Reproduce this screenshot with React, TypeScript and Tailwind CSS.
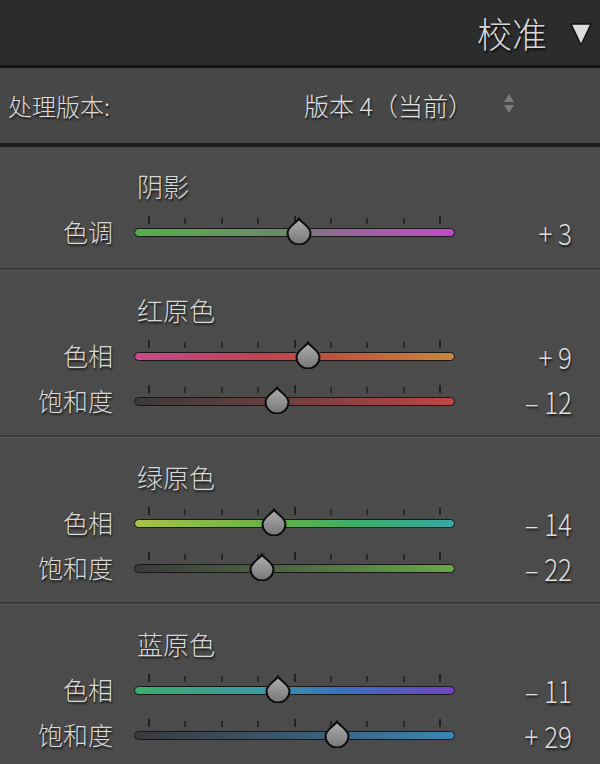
import React from "react";

type Row = { label: string; value: number; track: string };
type Section = { title: string; rows: Row[] };

const sections: Section[] = [
  {
    title: "阴影",
    rows: [
      {
        label: "色调",
        value: 3,
        track: "bg-[linear-gradient(to_right,#54b04a,#6b8a68_46%,#86708a_56%,#c448c8)]",
      },
    ],
  },
  {
    title: "红原色",
    rows: [
      {
        label: "色相",
        value: 9,
        track: "bg-[linear-gradient(to_right,#c8488c,#c04450_40%,#c0503c_60%,#c8863c)]",
      },
      {
        label: "饱和度",
        value: -12,
        track: "bg-[linear-gradient(to_right,#3a3a3a,#6a4040_45%,#c44444)]",
      },
    ],
  },
  {
    title: "绿原色",
    rows: [
      {
        label: "色相",
        value: -14,
        track: "bg-[linear-gradient(to_right,#a8c444,#64b048_45%,#3aae6a_70%,#34aaa6)]",
      },
      {
        label: "饱和度",
        value: -22,
        track: "bg-[linear-gradient(to_right,#3a3a3a,#4c6440_45%,#66aa46)]",
      },
    ],
  },
  {
    title: "蓝原色",
    rows: [
      {
        label: "色相",
        value: -11,
        track: "bg-[linear-gradient(to_right,#3cac6c,#3a9aa8_40%,#3a70c0_65%,#7044c4)]",
      },
      {
        label: "饱和度",
        value: 29,
        track: "bg-[linear-gradient(to_right,#3a3a3a,#3a5a70_50%,#3c86b6)]",
      },
    ],
  },
];

const ticks = [0, 1, 2, 3, 4, 5, 6, 7, 8];

const Thumb = () => (
  <svg width="26" height="28" viewBox="0 0 26 28">
    <defs>
      <linearGradient id="thumbFill" x1="0" y1="0" x2="0" y2="1">
        <stop offset="0" stopColor="#b0b0b0" />
        <stop offset="1" stopColor="#767676" />
      </linearGradient>
    </defs>
    <path
      d="M13 1.5 C15 5.5 24.5 10 24.5 16 A11.5 11.5 0 0 1 1.5 16 C1.5 10 11 5.5 13 1.5 Z"
      fill="url(#thumbFill)"
      stroke="#0d0d0d"
      strokeWidth="2"
    />
  </svg>
);

const Slider = ({ row }: { row: Row }) => {
  const center = 160.5 + row.value * 1.455;
  const shown = row.value > 0 ? `+ ${row.value}` : `– ${Math.abs(row.value)}`;
  return (
    <div className="h-[45px] flex items-center">
      <span className="w-[113px] text-right text-[25px] font-light text-[#d8d8d8] [text-shadow:1px_2px_2px_rgba(0,0,0,0.7)]">
        {row.label}
      </span>
      <div className="relative ml-[21px] w-[321px] h-[45px] flex items-center">
        {ticks.map((t) => (
          <div
            key={t}
            className={
              t % 4 === 0
                ? "absolute top-[7px] w-[2px] h-[8px] bg-[#222]"
                : "absolute top-[9px] w-[2px] h-[6px] bg-[#2a2a2a]"
            }
            style={{ left: 14 + t * 36.4 }}
          />
        ))}
        <div className={`mt-[1px] w-full h-[9px] rounded-full border-[1.5px] border-[#181818] ${row.track}`} />
        <div className="absolute top-[8px]" style={{ left: center - 13 }}>
          <Thumb />
        </div>
      </div>
      <div className="flex-1 pr-[28px] flex justify-end">
        <span className="inline-block scale-y-[1.15] whitespace-pre text-[26px] font-light text-[#dedede] [text-shadow:1px_2px_2px_rgba(0,0,0,0.7)]">
          {shown}
        </span>
      </div>
    </div>
  );
};

export default function App() {
  return (
    <div className="w-[600px] h-[764px] overflow-hidden bg-[#4b4b4b] font-['Noto_Sans_CJK_SC',sans-serif]">
      <div className="h-[65px] bg-[#2c2c2c] flex items-center justify-end pr-[7px]">
        <span className="text-[35px] leading-none font-light text-[#d6d6d6] [text-shadow:1px_2px_2px_rgba(0,0,0,0.8)]">
          校准
        </span>
        <svg className="ml-[22px] mt-[4px]" width="24" height="25" viewBox="0 0 24 25">
          <polygon points="2,2 22,2 12,23" fill="#dcdcdc" stroke="#111" strokeWidth="1.5" strokeLinejoin="round" />
        </svg>
      </div>
      <div className="h-[3px] bg-[#131313]" />
      <div className="h-[75px] bg-[#474747] flex items-center">
        <span className="w-[304px] pl-[8px] text-[24px] font-light text-[#dcdcdc] [text-shadow:1px_2px_2px_rgba(0,0,0,0.7)]">
          处理版本:
        </span>
        <span className="text-[25px] font-light text-[#e0e0e0] [text-shadow:1px_2px_2px_rgba(0,0,0,0.7)]">
          版本 4（当前）
        </span>
        <svg className="ml-[30px] -mt-[4px]" width="12" height="22" viewBox="0 0 12 22">
          <polygon points="6,1 11,9 1,9" fill="#7c7c7c" />
          <polygon points="1,12 11,12 6,20" fill="#7c7c7c" />
        </svg>
      </div>
      <div className="h-[4px] bg-[#1b1b1b]" />
      {sections.map((s, i) => (
        <div key={s.title}>
          {i > 0 && (
            <>
              <div className="h-[2px] bg-[#393939]" />
              <div className="h-px bg-[#575757]" />
            </>
          )}
          <div className={i === 0 ? "pt-[22px] pb-[14px]" : "pt-[22px] pb-[12px]"}>
            <div className="h-[32px] mb-[8px] pl-[137px] flex items-center text-[26px] font-light text-[#d6d6d6] [text-shadow:1px_2px_2px_rgba(0,0,0,0.7)]">
              {s.title}
            </div>
            {s.rows.map((r) => (
              <Slider key={r.label} row={r} />
            ))}
          </div>
        </div>
      ))}
    </div>
  );
}
